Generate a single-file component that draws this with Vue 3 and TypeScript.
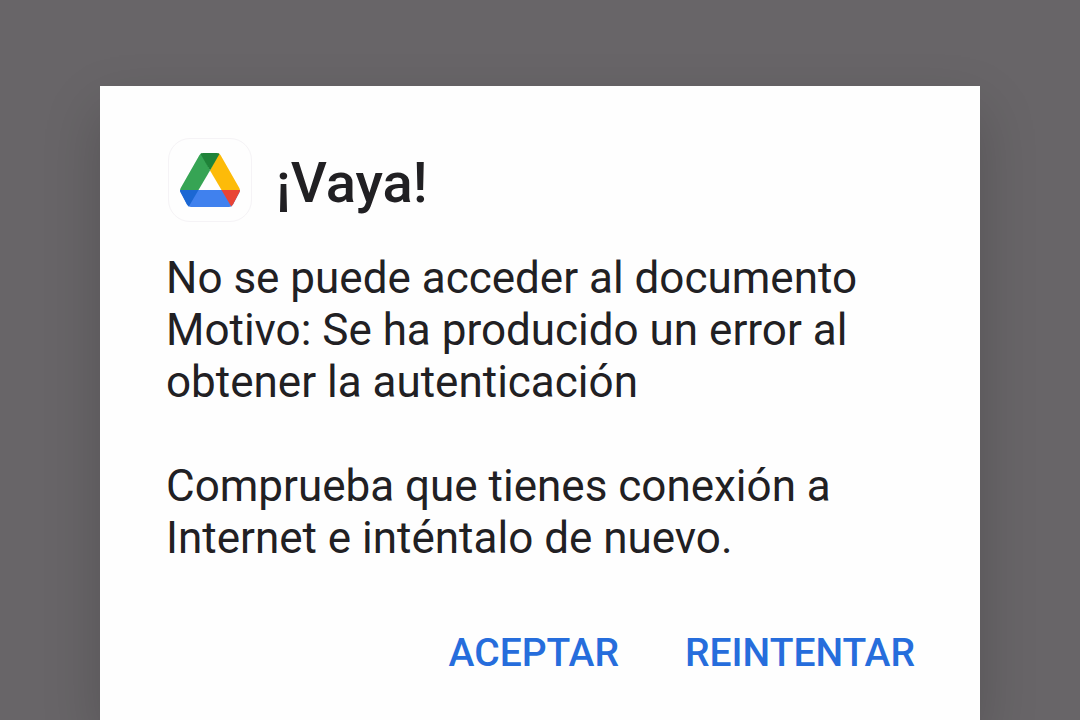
<script setup lang="ts">
const title = '¡Vaya!'
</script>

<template>
  <main class="scrim">
    <section class="dialog" role="alertdialog" aria-labelledby="title" aria-describedby="message">
      <header class="head">
        <span class="app-icon">
          <svg viewBox="0 0 60 54" width="60" height="54" aria-hidden="true">
            <defs>
              <clipPath id="outline">
                <path d="M23 0H37Q39.300 0 40.500 2L59.300 35Q60.600 37.500 59.300 39.500L53 51.500Q51.500 54 49 54H11Q8.500 54 7 51.500L.7 39.500Q-.6 37.500 .7 35L19.500 2Q20.700 0 23 0Z" />
              </clipPath>
            </defs>
            <g clip-path="url(#outline)">
              <path d="M18 0H22L30 17.500 18.500 37H-1V33Z" fill="#36a454" />
              <path d="M38 0H42L61 34V37H41.500L30 17.500Z" fill="#fdbb09" />
              <path d="M20 0H40L30 17.500Z" fill="#1f8339" />
              <path d="M-1 37H61V54H-1Z" fill="#4081ee" />
              <path d="M-1 37H18.500L8.500 54H-1Z" fill="#1b67d3" />
              <path d="M41.500 37H61V54H51.500Z" fill="#e94435" />
            </g>
          </svg>
        </span>
        <h1 id="title">{{ title }}</h1>
      </header>
      <div id="message" class="message">
        <p>No se puede acceder al documento<br />Motivo: Se ha producido un error al obtener la autenticación</p>
        <p>Comprueba que tienes conexión a Internet e inténtalo de nuevo.</p>
      </div>
      <footer class="actions">
        <button type="button">ACEPTAR</button>
        <button type="button">REINTENTAR</button>
      </footer>
    </section>
  </main>
</template>

<style>
body {
  background: #686568;
}
</style>

<style scoped>
.scrim {
  box-sizing: border-box;
  min-height: 100vh;
  padding: 86px 100px 0;
  display: flex;
  font-family: Roboto, sans-serif;
  color: #212023;
  overflow: hidden;
}
.dialog {
  box-sizing: border-box;
  flex: 1;
  padding: 52px 65px 0 66px;
  background: #fefefe;
  box-shadow: 0 24px 54px rgba(0, 0, 0, 0.18);
}
.head {
  display: flex;
  align-items: center;
  gap: 24px;
  padding-left: 2px;
}
.app-icon {
  box-sizing: border-box;
  width: 84px;
  height: 84px;
  display: flex;
  align-items: center;
  justify-content: center;
  border: 1px solid #f5f3f6;
  border-radius: 22px;
}
h1 {
  margin: 6px 0 0;
  font-size: 56px;
  font-weight: 500;
  line-height: 64px;
}
.message {
  margin-top: 30px;
  font-size: 44px;
  line-height: 52px;
}
.message p {
  margin: 0 0 52px;
}
.message p:last-child {
  margin-bottom: 0;
}
.actions {
  display: flex;
  justify-content: flex-end;
  gap: 66px;
  margin-top: 65px;
}
button {
  padding: 0;
  border: 0;
  background: none;
  color: #266ddc;
  font: 500 39px/48px Roboto, sans-serif;
  cursor: pointer;
}
</style>
